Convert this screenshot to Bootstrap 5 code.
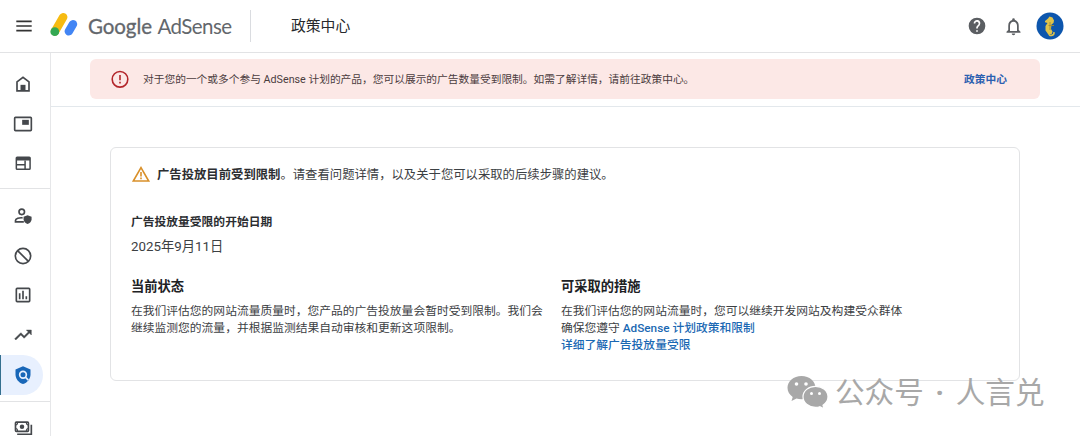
<!DOCTYPE html>
<html lang="zh-CN">
<head>
    <meta charset="UTF-8">
    <meta name="viewport" content="width=device-width, initial-scale=1.0">
    <title>政策中心</title>
    <link href="https://cdn.jsdelivr.net/npm/bootstrap@5.3.0/dist/css/bootstrap.min.css" rel="stylesheet">
    <style>
        body {
            font-family: Roboto, "Noto Sans CJK SC", sans-serif;
            font-size: 11.77px;
            line-height: 16.7px;
            color: #3c4043;
            height: 436px;
            overflow: hidden;
        }
        a {
            color: #1a68b3;
            text-decoration: none;
        }
        svg {
            display: block;
            flex: none;
        }
        .top-bar {
            height: 53px;
            border-bottom: 1px solid #e2e3e5;
            padding: 0 16px 0 15px;
        }
        .brand-mark {
            margin-left: 17px;
        }
        .brand-text {
            font-family: Lato, sans-serif;
            margin-left: 10px;
        }
        .brand-rule {
            height: 32px;
            width: 1px;
            background: #dadce0;
            margin-left: 17px;
        }
        .page-name {
            font-size: 14.8px;
            line-height: 20px;
            color: #27292c;
            margin-left: 40px;
        }
        .bell-icon {
            margin-left: 16px;
        }
        .avatar-icon {
            margin-left: 12px;
        }
        .side-bar {
            width: 51px;
            flex: none;
            border-right: 1px solid #e6e7e9;
            color: #45484c;
        }
        .side-group {
            padding: 7px 0 6px;
            border-bottom: 1px solid #e2e3e5;
        }
        .side-group:first-child {
            padding-top: 11px;
            padding-bottom: 5px;
        }
        .side-group:last-child {
            border-bottom: 0;
        }
        .side-item {
            height: 39.7px;
            width: 43px;
            padding-left: 13px;
        }
        .side-item.current {
            background: #e8f0fe;
            border-left: 1px solid #35708f;
            border-radius: 0 20px 20px 0;
            padding-left: 12px;
            color: #1967b8;
        }
        .notice-strip {
            height: 54px;
            padding: 6px 40px 0 39px;
            border-bottom: 1px solid #e3e8ec;
        }
        .notice {
            height: 40px;
            background: #fce8e6;
            border-radius: 6px;
            padding: 0 33px 0 21px;
            font-size: 10.72px;
            color: #4b3c3e;
        }
        .notice-text {
            padding: 2px 0 0 14px;
        }
        .notice-link {
            font-weight: 700;
            color: #2b5fb0;
            padding-top: 3px;
        }
        .issue-panel {
            margin: 40px 60px 0 59px;
            height: 234px;
            border: 1px solid #e2e3e5;
            border-radius: 6px;
            padding: 16px 20px;
        }
        .issue-title {
            font-size: 12.35px;
            line-height: 22px;
            gap: 6px;
            margin-bottom: 28px;
        }
        .strong-text {
            font-weight: 700;
            color: #2c2e31;
        }
        .start-date {
            font-size: 13.3px;
            line-height: 20px;
            margin: 6px 0 20px;
        }
        .section-title {
            font-size: 13.25px;
            line-height: 20px;
            font-weight: 700;
            color: #202124;
            margin: 0 0 6.5px;
        }
        .status-col {
            width: 430px;
        }
        .watermark {
            position: absolute;
            left: 786px;
            top: 371px;
            color: #a8a8a8;
            font-size: 29.6px;
            line-height: 40px;
        }
        .watermark-name {
            margin-left: 6px;
            padding-top: 2px;
        }
        .watermark-dot {
            display: inline-block;
            width: 32px;
        }
    </style>
</head>
<body>
    <header class="top-bar d-flex align-items-center">
        <svg width="18" height="18" viewBox="0 0 18 18" stroke="#333" stroke-width="1.7"><path d="M1.3 4.3h15.4M1.3 9h15.4M1.3 13.7h15.4"/></svg>
        <svg class="brand-mark" width="28" height="26" viewBox="0 0 28 26" fill="none" stroke-linecap="round">
            <path d="M5 18.4 13.2 4.2" stroke="#f6bb12" stroke-width="8.4"/>
            <circle cx="4.8" cy="18.7" r="4.4" fill="#34a853"/>
            <path d="M18.8 18.3 23 11.2" stroke="#4285f4" stroke-width="8.4"/>
        </svg>
        <svg class="brand-text" width="145" height="32" viewBox="0 0 145 32" fill="#63676c">
            <text x="0" y="24" font-size="20.5" stroke="#63676c" stroke-width=".3" textLength="64">Google</text>
            <text x="69.5" y="24" font-size="20.5" textLength="74.5">AdSense</text>
        </svg>
        <div class="brand-rule"></div>
        <div class="page-name">政策中心</div>
        <div class="d-flex align-items-center ms-auto">
            <svg width="20" height="20" viewBox="0 0 24 24" fill="#5b5e62"><path d="M12 2a10 10 0 1 0 0 20 10 10 0 0 0 0-20zm1 17h-2v-2h2v2zm2.07-7.75-.9.92C13.45 12.9 13 13.5 13 15h-2v-.5c0-1.1.45-2.1 1.17-2.83l1.24-1.26A2 2 0 1 0 10 9H8a4 4 0 1 1 7.07 2.25z"/></svg>
            <svg class="bell-icon" width="21" height="21" viewBox="0 0 24 24" fill="#5b5e62"><path d="M12 22a2 2 0 0 0 2-2h-4c0 1.1.9 2 2 2zm6-6v-5c0-3.07-1.63-5.64-4.5-6.32V4a1.5 1.5 0 0 0-3 0v.68C7.64 5.36 6 7.92 6 11v5l-2 2v1h16v-1l-2-2zm-2 1H8v-6c0-2.48 1.51-4.5 4-4.5s4 2.02 4 4.5v6z"/></svg>
            <svg class="avatar-icon" width="28" height="28" viewBox="0 0 28 28">
                <circle cx="14" cy="14" r="13.5" fill="#0d56ad"/>
                <path d="M9 9 12 6.500 13.500 4.500 16.500 5.500 18 8.500 17.500 11 15.500 12.500 15 17 16.500 19.500 15.500 22.500 12 22 9.500 18.500 9.500 14 11.500 11 9 10.300z" fill="#dfc34a"/>
                <path d="M12.500 21q.5 3 3.200 2.500t2.300-3.500" fill="none" stroke="#dfc34a" stroke-width="1.4"/>
                <path d="M14 10v8M12.500 13.500h5.500" stroke="#a08a35" stroke-width=".9"/>
            </svg>
        </div>
    </header>

    <div class="d-flex">
        <nav class="side-bar">
            <div class="side-group">
                <div class="side-item d-flex align-items-center">
                    <svg width="20" height="20" viewBox="0 0 24 24" fill="none" stroke="currentColor" stroke-width="2"><path d="M4.8 9.500 12 4l7.200 5.500v10.700H4.800z"/><path d="M9 20v-7h6v7z" fill="currentColor" stroke="none"/></svg>
                </div>
                <div class="side-item d-flex align-items-center">
                    <svg width="20" height="20" viewBox="0 0 24 24" fill="none" stroke="currentColor" stroke-width="2"><rect x="2" y="4" width="20" height="16" rx="1"/><path d="M11 7h8v6h-8z" fill="currentColor" stroke="none"/></svg>
                </div>
                <div class="side-item d-flex align-items-center">
                    <svg width="20" height="20" viewBox="0 0 24 24" fill="none" stroke="currentColor" stroke-width="1.8"><rect x="4" y="5" width="16.5" height="14.5" rx="1"/><path d="M4 7h16.5" stroke-width="4"/><path d="M4 14h10M14.5 9v10.5"/></svg>
                </div>
            </div>
            <div class="side-group">
                <div class="side-item d-flex align-items-center">
                    <svg width="20" height="20" viewBox="0 0 24 24" fill="none" stroke="currentColor" stroke-width="2"><circle cx="10.5" cy="7" r="3.3"/><path d="M13 19H3v-1.5C3 15 7.5 13.8 11.5 14.2"/><path d="m17.500 11 4.800 1.900v3c0 2.700-2 4.800-4.800 5.600-2.800-.8-4.800-2.900-4.800-5.600v-3z" fill="currentColor" stroke="none"/></svg>
                </div>
                <div class="side-item d-flex align-items-center">
                    <svg width="20" height="20" viewBox="0 0 24 24" fill="none" stroke="currentColor" stroke-width="2"><circle cx="12" cy="12" r="9.2"/><path d="m5.500 5.500 13 13"/></svg>
                </div>
                <div class="side-item d-flex align-items-center">
                    <svg width="20" height="20" viewBox="0 0 24 24" fill="none" stroke="currentColor" stroke-width="2"><rect x="4" y="4" width="16" height="16" rx="1"/><path d="M8 10v7M12 7v10M16 13.5V17"/></svg>
                </div>
                <div class="side-item d-flex align-items-center">
                    <svg width="20" height="20" viewBox="0 0 24 24" fill="currentColor"><path d="m16 6 2.290 2.290-4.880 4.880-4-4L2 16.590 3.410 18l6-6 4 4 6.300-6.290L22 12V6z" stroke="currentColor" stroke-width=".5"/></svg>
                </div>
                <div class="side-item current d-flex align-items-center">
                    <svg width="20" height="20" viewBox="0 0 24 24"><path d="m12 1.500 9 3.800V11c0 5.500-3.800 10.300-9 11.700C6.800 21.300 3 16.500 3 11V5.300z" fill="currentColor"/><circle cx="12" cy="11.700" r="4" fill="none" stroke="#e8f0fe" stroke-width="2"/><path d="m14.800 14.500 3.600 3.700" stroke="#e8f0fe" stroke-width="2"/></svg>
                </div>
            </div>
            <div class="side-group">
                <div class="side-item d-flex align-items-center">
                    <svg width="20" height="20" viewBox="0 0 24 24" fill="none" stroke="currentColor" stroke-width="2"><rect x="3" y="5" width="15.5" height="11" rx="1"/><circle cx="10.8" cy="10.5" r="2.7" fill="currentColor" stroke="none"/><path d="M22 8v11.500H5"/><path d="M3 8.500q2.500 0 2.500-3M3 12.500q2.500 0 2.500 3M18.500 8.500q-2.500 0-2.500-3M18.500 12.500q-2.500 0-2.500 3" stroke-width="1.3"/></svg>
                </div>
            </div>
        </nav>

        <main class="flex-grow-1">
            <div class="notice-strip">
                <div class="notice d-flex align-items-center">
                    <svg width="18" height="18" viewBox="0 0 18 18" fill="none" stroke="#b3262b" stroke-width="1.6"><circle cx="9" cy="9.3" r="7.8"/><path d="M9 5v5.200M9 11.800v1.700"/></svg>
                    <div class="notice-text flex-grow-1">对于您的一个或多个参与 AdSense 计划的产品，您可以展示的广告数量受到限制。如需了解详情，请前往政策中心。</div>
                    <a class="notice-link" href="#">政策中心</a>
                </div>
            </div>

            <section class="issue-panel">
                <div class="issue-title d-flex align-items-center">
                    <svg width="20" height="20" viewBox="0 0 20 20" fill="none" stroke="#d9902a" stroke-width="1.6"><path d="M10 2.700 17.700 16H2.300z"/><path d="M10 7v4.500M10 12.500v1.700"/></svg>
                    <div><span class="strong-text">广告投放目前受到限制</span>。请查看问题详情，以及关于您可以采取的后续步骤的建议。</div>
                </div>
                <div class="strong-text">广告投放量受限的开始日期</div>
                <div class="start-date">2025年9月11日</div>
                <div class="d-flex text-nowrap">
                    <div class="status-col flex-shrink-0">
                        <h2 class="section-title">当前状态</h2>
                        在我们评估您的网站流量质量时，您产品的广告投放量会暂时受到限制。我们会<br>
                        继续监测您的流量，并根据监测结果自动审核和更新这项限制。
                    </div>
                    <div>
                        <h2 class="section-title">可采取的措施</h2>
                        在我们评估您的网站流量时，您可以继续开发网站及构建受众群体<br>
                        确保您遵守 <a class="fw-medium" href="#">AdSense 计划政策和限制</a><br>
                        <a class="fw-medium" href="#">详细了解广告投放量受限</a>
                    </div>
                </div>
            </section>
        </main>
    </div>

    <div class="watermark d-flex align-items-center text-nowrap">
        <svg width="43" height="36" viewBox="0 0 43 36">
            <path d="M15.500 2C7.500 2 1.500 7.200 1.500 13.800c0 3.800 2 7 5.200 9.200L5.500 27l5-2.500c1.600.5 3.300.7 5 .7 8 0 14-5 14-11.400S23.500 2 15.500 2z" fill="#a8a8a8"/>
            <path d="M29.500 12.300c-7 0-12.500 4.700-12.500 10.500s5.500 10.500 12.500 10.500c1.500 0 3-.2 4.300-.6l4.200 2.100-1-3.500c3-1.900 5-5 5-8.500 0-5.800-5.500-10.500-12.500-10.500z" fill="#a8a8a8" stroke="#fff" stroke-width="1.2"/>
            <g fill="#fff"><circle cx="10.5" cy="10" r="1.8"/><circle cx="20" cy="10" r="1.8"/><circle cx="25.5" cy="19.5" r="1.5"/><circle cx="33.5" cy="19.5" r="1.5"/></g>
        </svg>
        <div class="watermark-name">公众号<span class="watermark-dot text-center fw-bold">·</span>人言兑</div>
    </div>
    <script src="https://cdn.jsdelivr.net/npm/bootstrap@5.3.0/dist/js/bootstrap.bundle.min.js"></script>
</body>
</html>
